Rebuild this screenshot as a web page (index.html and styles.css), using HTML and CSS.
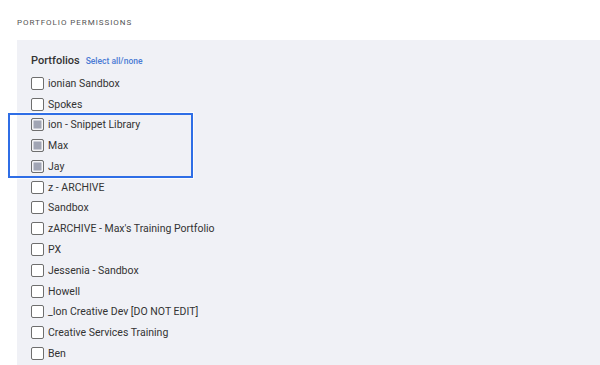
FILE: index.html
```html
<!DOCTYPE html>
<html lang="en">
<head>
    <meta charset="UTF-8">
    <title>Portfolio Permissions</title>
    <link rel="stylesheet" href="styles.css">
</head>
<body>
    <div class="section-title">PORTFOLIO PERMISSIONS</div>

    <div class="panel">
        <div class="panel-head">
            <span class="panel-label">Portfolios</span>
            <a class="select-link" href="#">Select all/none</a>
        </div>
        <ul class="portfolio-list">
            <li class="item"><span class="box"></span>ionian Sandbox</li>
            <li class="item"><span class="box"></span>Spokes</li>
            <li class="item"><span class="box checked"></span>ion - Snippet Library</li>
            <li class="item"><span class="box checked"></span>Max</li>
            <li class="item"><span class="box checked"></span>Jay</li>
            <li class="item"><span class="box"></span>z - ARCHIVE</li>
            <li class="item"><span class="box"></span>Sandbox</li>
            <li class="item"><span class="box"></span>zARCHIVE - Max's Training Portfolio</li>
            <li class="item"><span class="box"></span>PX</li>
            <li class="item"><span class="box"></span>Jessenia - Sandbox</li>
            <li class="item"><span class="box"></span>Howell</li>
            <li class="item"><span class="box"></span>_Ion Creative Dev [DO NOT EDIT]</li>
            <li class="item"><span class="box"></span>Creative Services Training</li>
            <li class="item"><span class="box"></span>Ben</li>
        </ul>
    </div>

    <!-- annotation frame around the selected rows -->
    <div class="highlight"></div>
</body>
</html>
```

FILE: styles.css
```css
body {
    font-family: Roboto, "Liberation Sans", sans-serif;
    margin: 0;
    padding: 0;
    background-color: #fff;
    color: #333;
    position: relative;
    height: 365px;
    overflow: hidden;
}
.section-title {
    padding: 18px 0 0 17px;
    height: 22px;
    font-size: 8px;
    letter-spacing: 0.95px;
    color: #555;
}
.panel {
    box-sizing: border-box;
    margin-left: 17px;
    background-color: #f0f1f6;
    padding: 14px 14px 0;
    height: 325px;
    overflow: hidden;
}
.panel-head {
    display: flex;
    align-items: baseline;
    gap: 6px;
    height: 19px;
}
.panel-label {
    font-size: 11px;
    font-weight: 500;
    color: #333;
}
.select-link {
    font-size: 8.5px;
    font-weight: 500;
    color: #4a7bd4;
    text-decoration: none;
}
.portfolio-list {
    list-style: none;
    margin: 0;
    padding: 0;
}
.item {
    display: flex;
    align-items: center;
    gap: 4px;
    height: 20.77px;
    font-size: 10.5px;
    color: #333;
}
.box {
    box-sizing: border-box;
    width: 13px;
    height: 13px;
    border: 1.3px solid #6e6e6e;
    border-radius: 2px;
    background: #fff;
    flex-shrink: 0;
}
.box.checked {
    background: #a1a5b4;
    box-shadow: inset 0 0 0 1.5px #f4f4f6;
}
.highlight {
    position: absolute;
    left: 8px;
    top: 113px;
    width: 185px;
    height: 65px;
    box-sizing: border-box;
    border: 2px solid #2f6ee6;
    box-shadow: 0 0 0 1px rgba(255,255,255,0.8);
}
```
